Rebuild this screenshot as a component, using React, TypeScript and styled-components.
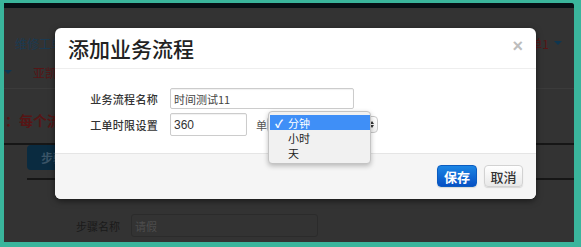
import styled, { createGlobalStyle } from "styled-components";

const GlobalStyle = createGlobalStyle`
  html, body {
    margin: 0;
    padding: 0;
    background: #3ab59c;
  }
  body {
    font-family: "Liberation Sans", "Noto Sans CJK SC", sans-serif;
  }
`;

const Frame = styled.div`
  width: 581px;
  height: 247px;
  box-sizing: border-box;
  padding: 3px 7px 5px 4px;
  background: #3ab59c;
`;

const Panel = styled.div`
  position: relative;
  height: 100%;
  background: #333333;
  border-top-right-radius: 3px;
  overflow: hidden;
  display: flex;
  flex-direction: column;
`;

const TopBar = styled.div`
  height: 5px;
  background: #081016;
  flex-shrink: 0;
`;

const NavRow = styled.div`
  height: 48px;
  display: flex;
  align-items: center;
  justify-content: space-between;
  padding: 22px 12px 0 11px;
  box-sizing: border-box;
  font-size: 12px;
  font-family: "Noto Sans CJK SC", sans-serif;
`;

const NavLink = styled.span<{ $red?: boolean }>`
  color: ${(p) => (p.$red ? "#561515" : "#1b3a51")};
  display: flex;
  align-items: center;
  gap: 5px;
`;

const Caret = styled.span<{ $color: string }>`
  width: 0;
  height: 0;
  border-left: 4px solid transparent;
  border-right: 4px solid transparent;
  border-top: 4px solid ${(p) => p.$color};
`;

const SubRow = styled.div`
  height: 33px;
  display: flex;
  align-items: center;
  gap: 21px;
  font-size: 12px;
  font-family: "Noto Sans CJK SC", sans-serif;
  color: #561515;
  border-bottom: 1px solid #3b3b3b;
  box-sizing: border-box;
`;

const Heading = styled.div`
  height: 56px;
  display: flex;
  align-items: center;
  padding: 8px 0 0 1px;
  font-size: 14px;
  font-weight: bold;
  font-family: "Noto Sans CJK SC", sans-serif;
  color: #561515;
  border-bottom: 2px solid #161616;
  box-sizing: border-box;
`;

const TabRow = styled.div`
  height: 35px;
  display: flex;
  align-items: flex-start;
  border-bottom: 2px solid #161616;
  box-sizing: border-box;
  margin-left: 23px;
`;

const TabButton = styled.div`
  height: 25px;
  padding: 0 14px;
  display: flex;
  align-items: center;
  background: #0a2b40;
  border-radius: 4px;
  color: #3a5467;
  font-size: 12px;
  font-weight: bold;
  font-family: "Noto Sans CJK SC", sans-serif;
`;

const FormRow = styled.div`
  display: flex;
  align-items: center;
  gap: 11px;
  padding: 34px 0 0 72px;
  font-size: 11px;
  font-family: "Noto Sans CJK SC", sans-serif;
  color: #1a1a1a;
`;

const GhostInput = styled.div`
  width: 182px;
  height: 21px;
  border: 1px solid #2b2b2b;
  border-radius: 3px;
  display: flex;
  align-items: center;
  padding-left: 3px;
  color: #4d4d4d;
`;

const Modal = styled.div`
  position: absolute;
  left: 51px;
  top: 25px;
  width: 481px;
  height: 171px;
  background: #ffffff;
  border-radius: 6px;
  box-shadow: 0 2px 6px rgba(0, 0, 0, 0.5);
  display: flex;
  flex-direction: column;
`;

const ModalHeader = styled.div`
  height: 41px;
  box-sizing: border-box;
  padding: 0 12px 0 13px;
  display: flex;
  align-items: center;
  justify-content: space-between;
  border-bottom: 1px solid #eeeeee;
`;

const Title = styled.h3`
  margin: 0;
  font-size: 21px;
  font-weight: 500;
  color: #222;
  font-family: "Noto Sans CJK SC", sans-serif;
`;

const Close = styled.span`
  font-size: 18px;
  font-weight: bold;
  color: #bdbdbd;
  line-height: 1;
  margin-top: -4px;
  margin-right: 1px;
`;

const ModalBody = styled.div`
  flex: 1;
  display: grid;
  grid-template-columns: 103px auto;
  column-gap: 12px;
  row-gap: 4px;
  align-content: start;
  padding-top: 19px;
`;

const Label = styled.label`
  font-size: 11px;
  font-weight: 500;
  color: #333;
  text-align: right;
  font-family: "Noto Sans CJK SC", sans-serif;
  align-self: center;
  letter-spacing: 0.3px;
`;

const Field = styled.div`
  display: flex;
  align-items: center;
  gap: 9px;
  position: relative;
`;

const TextInput = styled.div<{ $w: number; $h: number }>`
  width: ${(p) => p.$w}px;
  height: ${(p) => p.$h}px;
  box-sizing: border-box;
  border: 1px solid #cccccc;
  border-radius: 2px;
  box-shadow: inset 0 1px 1px rgba(0, 0, 0, 0.06);
  display: flex;
  align-items: center;
  padding-left: 3px;
  font-size: 12px;
  color: #333;
`;

const Muted = styled.span`
  color: #555;
  font-size: 11px;
  font-family: "Noto Sans CJK SC", sans-serif;
`;

const SelectBox = styled.div`
  width: 111px;
  height: 17px;
  box-sizing: border-box;
  border: 1px solid #c8c8c8;
  border-radius: 4px;
  margin-left: -20px;
  display: flex;
  align-items: center;
  justify-content: flex-end;
  padding-right: 3px;
  background: linear-gradient(#ffffff, #f0f0f0);
`;

const Arrows = styled.span`
  display: flex;
  flex-direction: column;
  gap: 1px;
`;

const Tri = styled.span<{ $up?: boolean }>`
  width: 0;
  height: 0;
  border-left: 2.5px solid transparent;
  border-right: 2.5px solid transparent;
  ${(p) =>
    p.$up ? "border-bottom: 3px solid #333;" : "border-top: 3px solid #333;"}
`;

const Popup = styled.ul`
  position: absolute;
  left: 98px;
  top: -2px;
  width: 101px;
  margin: 0;
  padding: 3px 0 3px;
  list-style: none;
  background: #f1f1f1;
  border: 1px solid #c4c4c4;
  border-radius: 4px;
  box-shadow: 0 2px 5px rgba(0, 0, 0, 0.25);
  font-family: "Noto Sans CJK SC", sans-serif;
  font-size: 11px;
  z-index: 2;
`;

const Option = styled.li<{ $active?: boolean }>`
  height: 15px;
  display: flex;
  align-items: center;
  margin: 0 0 0 1px;
  padding-left: 5px;
  color: ${(p) => (p.$active ? "#fff" : "#222")};
  background: ${(p) => (p.$active ? "#3f8ff7" : "transparent")};
`;

const Check = styled.span<{ $show?: boolean }>`
  width: 13px;
  font-size: 11px;
  font-weight: bold;
  visibility: ${(p) => (p.$show ? "visible" : "hidden")};
`;

const ModalFooter = styled.div`
  height: 46px;
  box-sizing: border-box;
  background: #f5f5f5;
  border-top: 1px solid #e5e5e5;
  border-radius: 0 0 6px 6px;
  display: flex;
  justify-content: flex-end;
  align-items: flex-start;
  gap: 7px;
  padding: 11px 13px 0 0;
`;

const Button = styled.button<{ $primary?: boolean }>`
  height: 22px;
  width: ${(p) => (p.$primary ? 40 : 39)}px;
  padding: 0;
  border-radius: 4px;
  font-family: "Noto Sans CJK SC", sans-serif;
  font-size: 13px;
  font-weight: ${(p) => (p.$primary ? "bold" : 500)};
  color: ${(p) => (p.$primary ? "#ffffff" : "#333")};
  border: 1px solid ${(p) => (p.$primary ? "#0b5cc0" : "#d2d2d2")};
  background: ${(p) =>
    p.$primary
      ? "linear-gradient(#1c86e4, #0650c4)"
      : "linear-gradient(#ffffff, #e8e8e8)"};
  box-shadow: 0 1px 1px rgba(0, 0, 0, 0.12);
`;

export default function App() {
  return (
    <>
      <GlobalStyle />
      <Frame>
        <Panel>
          <TopBar />
          <NavRow>
            <NavLink>维修工单</NavLink>
            <NavLink $red>
              单1 <Caret $color="#0e3650" />
            </NavLink>
          </NavRow>
          <SubRow>
            <Caret $color="#0e3650" />
            <span>亚凯流程</span>
          </SubRow>
          <Heading>：每个流程</Heading>
          <TabRow>
            <TabButton>步骤</TabButton>
          </TabRow>
          <FormRow>
            <span>步骤名称</span>
            <GhostInput>请假</GhostInput>
          </FormRow>

          <Modal>
            <ModalHeader>
              <Title>添加业务流程</Title>
              <Close>×</Close>
            </ModalHeader>
            <ModalBody>
              <Label>业务流程名称</Label>
              <Field>
                <TextInput $w={184} $h={21}>
                  <Muted style={{ color: "#444" }}>时间测试11</Muted>
                </TextInput>
              </Field>
              <Label>工单时限设置</Label>
              <Field>
                <TextInput $w={77} $h={23}>
                  360
                </TextInput>
                <Muted>单位</Muted>
                <SelectBox>
                  <Arrows>
                    <Tri $up />
                    <Tri />
                  </Arrows>
                </SelectBox>
                <Popup>
                  <Option $active>
                    <Check $show>✓</Check>分钟
                  </Option>
                  <Option>
                    <Check />小时
                  </Option>
                  <Option>
                    <Check />天
                  </Option>
                </Popup>
              </Field>
            </ModalBody>
            <ModalFooter>
              <Button $primary>保存</Button>
              <Button>取消</Button>
            </ModalFooter>
          </Modal>
        </Panel>
      </Frame>
    </>
  );
}
